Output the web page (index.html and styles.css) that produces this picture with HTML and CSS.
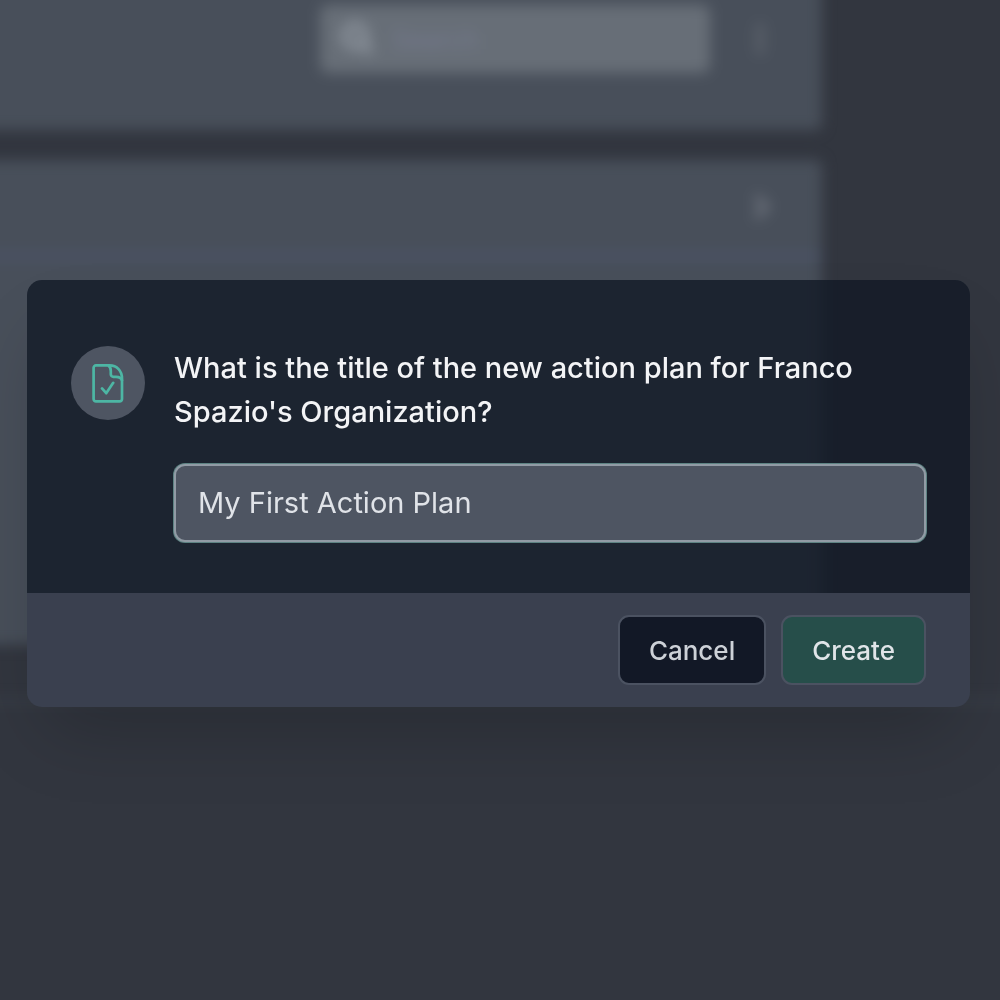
FILE: index.html
```
<!DOCTYPE html>
<html lang="en">
<head>
    <meta charset="UTF-8">
    <meta name="viewport" content="width=device-width, initial-scale=1.0">
    <title>New Action Plan</title>
    <link rel="stylesheet" href="styles.css">
</head>
<body>
    <div class="page" aria-hidden="true" inert>
        <div class="card toolbar">
            <div class="search">
                <svg viewBox="0 0 24 24">
                    <circle cx="10" cy="10" r="7"/>
                    <path d="M15 15l6 6"/>
                </svg>
                <input type="search" placeholder="Search" aria-label="Search">
            </div>
            <svg class="dots" viewBox="0 0 24 24">
                <circle cx="12" cy="5" r="3"/>
                <circle cx="12" cy="12" r="3"/>
                <circle cx="12" cy="19" r="3"/>
            </svg>
        </div>
        <div class="card list">
            <div class="list-row">
                <svg class="chevron" viewBox="0 0 24 24">
                    <path d="M9 5l7 7-7 7"/>
                </svg>
            </div>
        </div>
        <div class="page-footer"></div>
    </div>

    <div class="overlay">
        <form class="modal" role="dialog" aria-modal="true" aria-labelledby="modal-title">
            <div class="modal-body">
                <div class="modal-icon">
                    <svg viewBox="0 0 44 44">
                        <path d="M23.5 4.4H10A2.4 2.4 0 0 0 7.6 6.8V38A2.4 2.4 0 0 0 10 40.4H33.6A2.4 2.4 0 0 0 36 38V17.5C36 10 31 4.4 23.5 4.4Z"/>
                        <path d="M22.5 4.4C24.2 5.8 24.8 7.6 24.8 10V13.2A2.6 2.6 0 0 0 27.4 15.8H30C33 15.8 35.3 16.6 36 19.4"/>
                        <path d="M16 27.4L20.2 32.2L27.2 21.8"/>
                    </svg>
                </div>
                <div class="modal-content">
                    <h2 id="modal-title"><label for="plan-title">What is the title of the new action plan for Franco Spazio's Organization?</label></h2>
                    <input type="text" id="plan-title" class="text-input" value="My First Action Plan">
                </div>
            </div>
            <div class="modal-footer">
                <button type="button" class="btn btn-secondary">Cancel</button>
                <button type="submit" class="btn btn-primary">Create</button>
            </div>
        </form>
    </div>
</body>
</html>
```
FILE: styles.css
```
* {
    margin: 0;
    padding: 0;
    box-sizing: border-box;
}

body {
    font-family: Inter, 'Liberation Sans', sans-serif;
    background: #32363f;
    min-height: 100vh;
    overflow: hidden;
}

/* dimmed page behind the dialog */
.page {
    display: flex;
    flex-direction: column;
    gap: 30px;
    min-height: 100vh;
    filter: blur(7px);
}

.card {
    background: #484f5a;
    margin-left: -30px;
    margin-right: 178px;
    border-radius: 6px;
}

.toolbar {
    display: flex;
    align-items: center;
    justify-content: flex-end;
    gap: 32px;
    height: 160px;
    margin-top: -30px;
    padding: 0 44px 22px 0;
}

.search {
    display: flex;
    align-items: center;
    gap: 16px;
    width: 390px;
    height: 68px;
    padding: 0 20px;
    border-radius: 8px;
    background: #676e77;
}

.search svg {
    width: 36px;
    height: 36px;
    fill: none;
    stroke: #8b929b;
    stroke-width: 5;
}

.search input {
    flex: 1;
    min-width: 0;
    border: none;
    background: none;
    font-family: inherit;
    font-size: 26px;
}

.search input::placeholder {
    color: #757a8f;
}

.dots,
.chevron {
    width: 36px;
    height: 36px;
    fill: #60666f;
}

.chevron {
    fill: none;
    stroke: #686e78;
    stroke-width: 5;
}

.list {
    height: 485px;
}

.list-row {
    display: flex;
    align-items: center;
    justify-content: flex-end;
    height: 98px;
    padding-right: 44px;
    border-bottom: 4px solid #4c5571;
}

.page-footer {
    flex: 1;
    margin: 24px -30px -30px;
    background: #32363f;
    border-top: 4px solid #3f434e;
}

.overlay {
    position: fixed;
    inset: 0;
    display: flex;
    align-items: center;
    justify-content: center;
    padding: 16px 30px 29px 27px;
}

.modal {
    width: 100%;
    max-width: 960px;
    border-radius: 15px;
    box-shadow: 0 40px 72px -18px rgba(0, 0, 0, 0.2);
}

.modal-body {
    display: flex;
    align-items: flex-start;
    gap: 29px;
    padding: 66px 44px 51px;
    border-radius: 15px 15px 0 0;
    background: rgba(18, 25, 37, 0.8);
}

.modal-icon {
    display: flex;
    align-items: center;
    justify-content: center;
    flex-shrink: 0;
    width: 74px;
    height: 74px;
    border-radius: 50%;
    background: #4e5562;
}

.modal-icon svg {
    width: 44px;
    height: 44px;
    fill: none;
    stroke: #4db6a4;
    stroke-width: 2.7;
    stroke-linecap: round;
    stroke-linejoin: round;
}

.modal-content {
    flex: 1;
    min-width: 0;
}

h2 {
    color: #f3f4f6;
    font-size: 29px;
    font-weight: 500;
    line-height: 44px;
    margin-bottom: 30px;
}

.text-input {
    display: block;
    width: 100%;
    height: 78px;
    padding: 0 22px 2px;
    border: 2px solid #919ba5;
    border-radius: 11px;
    outline: none;
    box-shadow: 0 0 0 1px #5d8383;
    background: #4e5562;
    color: #e0e3e8;
    font-family: inherit;
    font-size: 29px;
}

.modal-footer {
    display: flex;
    justify-content: flex-end;
    gap: 15px;
    padding: 22px 44px;
    border-radius: 0 0 15px 15px;
    background: #3a404f;
}

.btn {
    height: 70px;
    padding: 0 29px;
    border: 2px solid #4b5261;
    border-radius: 11px;
    font-family: inherit;
    font-size: 26px;
    font-weight: 500;
    cursor: pointer;
}

.btn-secondary {
    background: #121826;
    color: #cdd1d7;
}

.btn-primary {
    background: #264e4a;
    color: #e0e4e8;
}

@media (max-width: 640px) {
    .modal-body {
        flex-direction: column;
        align-items: center;
        padding: 30px 22px;
    }

    .modal-content {
        width: 100%;
    }

    .modal-footer {
        padding: 22px;
    }
}
```
